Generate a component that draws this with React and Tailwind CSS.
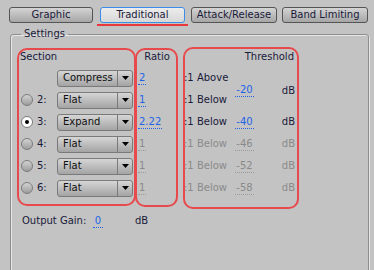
import React from 'react';

const rows = [
  { id: 1, mode: 'Compress', ratio: '2', radio: false },
  { id: 2, mode: 'Flat', ratio: '1', radio: true },
  { id: 3, mode: 'Expand', ratio: '2.22', radio: true, checked: true },
  { id: 4, mode: 'Flat', ratio: '1', radio: true, off: true },
  { id: 5, mode: 'Flat', ratio: '1', radio: true, off: true },
  { id: 6, mode: 'Flat', ratio: '1', radio: true, off: true },
];

const thresholds = [
  { v: '-40', off: false },
  { v: '-46', off: true },
  { v: '-52', off: true },
  { v: '-58', off: true },
];

const Tab = ({ label, width, active }) => (
  <div
    className={
      'h-[16px] rounded-[3px] border flex items-center justify-center ' +
      (active
        ? 'border-[#3a8ee8] bg-linear-to-b from-[#ececec] to-[#d8d8d8]'
        : 'border-[#555555] bg-linear-to-b from-[#d4d4d4] to-[#a6a6a6]')
    }
    style={{ width }}
  >
    {label}
  </div>
);

const Radio = ({ checked }) =>
  checked ? (
    <div className="w-[12px] h-[12px] rounded-full border border-[#7a7a7a] bg-white flex items-center justify-center">
      <div className="w-[4px] h-[4px] rounded-full bg-black" />
    </div>
  ) : (
    <div className="w-[12px] h-[12px] rounded-full border border-[#7c7c7c] bg-linear-to-b from-[#d2d2d2] to-[#9e9e9e]" />
  );

const Dropdown = ({ value }) => (
  <div className="w-[76px] h-[17px] flex rounded-[3px] border border-[#7a7a7a] bg-linear-to-b from-[#d6d6d6] to-[#a4a4a4] text-[#101010]">
    <div className="flex-1 flex items-center pl-[5px]">{value}</div>
    <div className="w-[15px] border-l border-[#7a7a7a] flex items-center justify-center">
      <svg width="7" height="4" viewBox="0 0 7 4">
        <path d="M0 0h7L3.5 4z" fill="#000" />
      </svg>
    </div>
  </div>
);

const Value = ({ children, off, className = '' }) => (
  <span
    className={
      'border-b border-dotted px-[1px] ' +
      (off ? 'text-[#8a8a8a] border-[#9a9a9a] ' : 'text-[#1f63e6] border-[#1f63e6] ') +
      className
    }
  >
    {children}
  </span>
);

export default function App() {
  return (
    <div className="w-[374px] h-[270px] overflow-hidden relative bg-[#c3c3c3] text-[#1a1a3a] text-[10px] leading-[12px] font-['DejaVu_Sans',sans-serif]">
      <div className="flex pt-[7px] pl-[9px]">
        <Tab label="Graphic" width={84} />
        <div className="ml-[7px]">
          <Tab label="Traditional" width={85} active />
        </div>
        <div className="ml-[6px]">
          <Tab label="Attack/Release" width={86} />
        </div>
        <div className="ml-[5px]">
          <Tab label="Band Limiting" width={86} />
        </div>
      </div>
      <div className="absolute left-[97px] top-[24px] w-[91px] h-[2px] bg-[#e8383c]" />

      <fieldset className="mt-[5px] ml-[10px] w-[359px] h-[260px] border border-[#8e8e8e] rounded-[3px] px-[6px] pt-[8px] shadow-[inset_1px_1px_0_#e6e6e6,1px_1px_0_#e6e6e6]">
        <legend className="ml-[4px] px-[3px]">Settings</legend>

        <div className="flex items-start">
          <div className="w-[119px] h-[158px] border-2 border-[#e8494d] rounded-[10px] pl-[1px]">
            <div className="h-[17px] pt-[1px]">Section</div>
            {rows.map((r) => (
              <div key={r.id} className="h-[22px] flex items-center">
                <div className="w-[12px] ml-[1px]">{r.radio && <Radio checked={r.checked} />}</div>
                <div className="w-[20px] ml-[4px]">{r.radio ? `${r.id}:` : ''}</div>
                <Dropdown value={r.mode} />
              </div>
            ))}
          </div>

          <div className="w-[43px] h-[159px] -ml-[1px] border-2 border-[#e8494d] rounded-[10px] pl-[1px]">
            <div className="h-[17px] pt-[1px] text-center">Ratio</div>
            {rows.map((r) => (
              <div key={r.id} className="h-[22px] flex items-center">
                <Value off={r.off}>{r.ratio}</Value>
              </div>
            ))}
          </div>

          <div className="w-[116px] h-[162px] ml-[5px] -mt-[1px] border-2 border-[#e8494d] rounded-[10px]">
            <div className="h-[18px] pt-[2px] text-right pr-[3px]">Threshold</div>
            <div className="h-[44px] flex items-center">
              <div className="w-[51px] -ml-[1px]">
                <div className="h-[22px] flex items-center">:1 Above</div>
                <div className="h-[22px] flex items-center">:1 Below</div>
              </div>
              <Value className="w-[19px] mt-[3px] text-center">-20</Value>
              <span className="ml-auto mr-[2px] mt-[3px]">dB</span>
            </div>
            {thresholds.map((t) => (
              <div key={t.v} className={'h-[22px] flex items-center ' + (t.off ? 'text-[#8a8a8a]' : '')}>
                <div className="w-[51px] -ml-[1px]">:1 Below</div>
                <Value off={t.off} className="w-[19px] text-center">{t.v}</Value>
                <span className="ml-auto mr-[2px]">dB</span>
              </div>
            ))}
          </div>
        </div>

        <div className="flex items-center h-[14px] mt-[5px] pl-[5px]">
          <span className="w-[71px]">Output Gain:</span>
          <Value className="w-[10px] text-center">0</Value>
          <span className="ml-[32px]">dB</span>
        </div>
      </fieldset>
    </div>
  );
}
